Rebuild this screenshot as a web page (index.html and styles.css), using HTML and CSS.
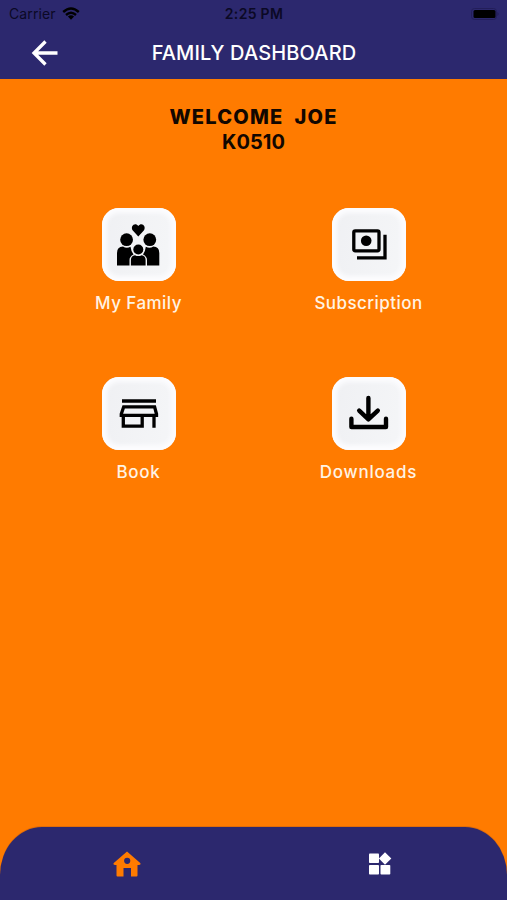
FILE: index.html
```html
<!DOCTYPE html>
<html lang="en">

<head>
    <meta charset="UTF-8">
    <meta name="viewport" content="width=device-width, initial-scale=1.0">
    <title>Family Dashboard</title>
    <link rel="stylesheet" href="styles.css">
</head>

<body>
    <div class="app">
        <header class="header">
            <div class="status">
                <div class="carrier">
                    <span>Carrier</span>
                    <svg class="wifi" viewBox="0 0 18 13" width="18" height="13">
                        <path d="M1.2 5Q9-2 16.8 5M4 8Q9 3.6 14 8" fill="none" stroke="#000" stroke-width="2.4" />
                        <path d="M5.9 9.6Q9 7 12.1 9.6L9 12.8Z" />
                    </svg>
                </div>
                <span class="time">2:25 PM</span>
                <svg class="battery" viewBox="0 0 28 12" width="28" height="12">
                    <rect x=".5" y=".5" width="25" height="11" rx="3" fill="none" stroke="#231e5a" />
                    <rect x="2.5" y="2" width="22" height="8" rx="1.5" />
                    <path d="M26.500 4v4q2-2 0-4" fill="#1e1a52" />
                </svg>
            </div>
            <div class="titlebar">
                <svg class="back" viewBox="0 0 28 28" width="28" height="28">
                    <path d="M26.500 14H3M14.500 2.500L3 14L14.500 25.500" fill="none" stroke="#fff" stroke-width="3.3" />
                </svg>
                <h1 class="title">FAMILY DASHBOARD</h1>
            </div>
        </header>

        <main class="main">
            <div class="welcome">
                <div class="name">WELCOME&nbsp; JOE</div>
                <div class="code">K0510</div>
            </div>
            <div class="grid">
                <a class="item">
                    <span class="tile">
                        <svg viewBox="0 0 74 74" width="74" height="74">
                            <path d="M36.3 28.5L30.8 22.5C27.8 18.5 33 13.5 36.3 18C39.6 13.5 44.8 18.5 41.8 22.5Z" />
                            <circle cx="24.6" cy="31.7" r="6.4" />
                            <circle cx="47.800" cy="31.7" r="6.4" />
                            <path d="M15 57.5V45Q15 38.5 21 38.5Q24.5 41 28.5 38.8Q29.2 44 31.5 46.5Q27.5 48.5 27.5 52V57.5Z" />
                            <path d="M57.3 57.5V45Q57.3 38.5 51.3 38.5Q47.8 41 43.8 38.8Q43.2 44 41 46.5Q45 48.5 45 52V57.5Z" />
                            <circle cx="36.3" cy="41.5" r="5" />
                            <path d="M28.9 57.5V52Q28.9 48 33 47.2Q36.3 49 39.6 47.2Q43.6 48 43.6 52V57.5Z" />
                        </svg>
                    </span>
                    <span class="label family">My Family</span>
                </a>
                <a class="item">
                    <span class="tile">
                        <svg viewBox="0 0 74 74" width="74" height="74">
                            <rect class="line" x="21.8" y="22.8" width="25.200" height="20" rx="1.5" />
                            <circle cx="34.2" cy="32.7" r="5.3" />
                            <path class="line" d="M25 49.8H53V26.7" />
                        </svg>
                    </span>
                    <span class="label subscription">Subscription</span>
                </a>
                <a class="item">
                    <span class="tile">
                        <svg viewBox="0 0 74 74" width="74" height="74">
                            <path class="line" d="M20 24H54M21.700 29.800H52.600L54.500 37V38.400H19.300V37ZM21.300 39V49.200H40.200V39M52 39V50.8" />
                        </svg>
                    </span>
                    <span class="label book">Book</span>
                </a>
                <a class="item">
                    <span class="tile">
                        <svg viewBox="0 0 74 74" width="74" height="74">
                            <path class="line thick" d="M36.4 21V42M27.2 33.6L36.4 42.4L45.8 33.6M19.4 41.8V50H54V41.8" />
                        </svg>
                    </span>
                    <span class="label downloads">Downloads</span>
                </a>
            </div>
        </main>

        <nav class="tabs">
            <a class="tab">
                <svg viewBox="0 0 28 26" width="28" height="26">
                    <path fill="#ff7b00" fill-rule="evenodd" d="M14 .5L27.5 12.2Q28 14 26 14H24.5V24.5Q24.5 25.5 23.5 25.5H18V17H10.5V25.5H4.5Q3.5 25.5 3.5 24.5V14H2Q0 14 .5 12.2ZM14.2 6.7A3.1 3.1 0 1 0 14.2 12.9A3.1 3.1 0 1 0 14.2 6.7Z" />
                </svg>
            </a>
            <a class="tab">
                <svg viewBox="0 0 23 23" width="23" height="23">
                    <g fill="#fff">
                        <rect x="0" y="1.5" width="10" height="9.5" rx=".8" />
                        <rect x="0" y="13" width="10" height="9.5" rx=".8" />
                        <rect x="11.5" y="13" width="9.8" height="9.5" rx=".8" />
                        <path d="M16 .2L22.3 6.5L16 12.8L9.9 6.5Z" />
                    </g>
                </svg>
            </a>
        </nav>
    </div>
</body>

</html>
```
FILE: styles.css
```css
body {
    margin: 0;
}

.app {
    display: flex;
    flex-direction: column;
    height: 100vh;
    background-color: #ff7b00;
    font-family: Inter, "Liberation Sans", sans-serif;
}

.header {
    height: 79px;
    background-color: #2c286e;
}

.status {
    display: grid;
    grid-template-columns: 1fr auto 1fr;
    align-items: center;
    height: 27px;
    padding: 0 8px 0 9px;
    font-size: 14px;
    color: #0b0925;
}

.carrier {
    display: flex;
    align-items: center;
    gap: 6px;
    letter-spacing: 0.1px;
}

.time {
    font-weight: 600;
    letter-spacing: 0.3px;
}

.battery {
    justify-self: end;
}

.titlebar {
    display: grid;
    grid-template-columns: 1fr auto 1fr;
    align-items: center;
    height: 51px;
}

.back {
    margin-left: 31px;
}

.title {
    margin: 0;
    font-size: 20px;
    font-weight: 500;
    line-height: 24px;
    letter-spacing: 0.15px;
    padding-left: 1px;
    color: #fff;
}

.main {
    flex: 1;
}

.welcome {
    padding-top: 26px;
    font-size: 20px;
    font-weight: 700;
    line-height: 25px;
    text-align: center;
    color: #120700;
}

.name {
    font-weight: 800;
    letter-spacing: 1.2px;
}

.grid {
    display: grid;
    grid-template-columns: 74px 74px;
    column-gap: 156px;
    row-gap: 61px;
    justify-content: center;
    margin-top: 53px;
}

.item {
    display: flex;
    flex-direction: column;
    align-items: center;
    height: 108px;
}

.tile {
    width: 74px;
    height: 73px;
    flex: none;
    border-radius: 17px;
    background: linear-gradient(100deg, #eff0f3, #f5f6f8);
    box-shadow: inset 0 0 4px 5px #fcfcfe;
}

.tile svg {
    display: block;
}

.line {
    fill: none;
    stroke: #000;
    stroke-width: 3.3;
}

.thick {
    stroke-width: 4.4;
    stroke-linecap: round;
    stroke-linejoin: round;
}

.label {
    margin-top: 11px;
    font-size: 17px;
    font-weight: 500;
    line-height: 22px;
    letter-spacing: 0.45px;
    white-space: nowrap;
    color: #fff3e4;
}

.book,
.downloads {
    letter-spacing: 0.75px;
}

.tabs {
    display: flex;
    height: 73px;
    border-radius: 42px 42px 0 0 / 48px 48px 0 0;
    background-color: #2c286e;
    box-shadow: 0 -1px 0 #e06c08;
}

.tab {
    flex: 1;
    display: flex;
    align-items: center;
    justify-content: center;
}
```
